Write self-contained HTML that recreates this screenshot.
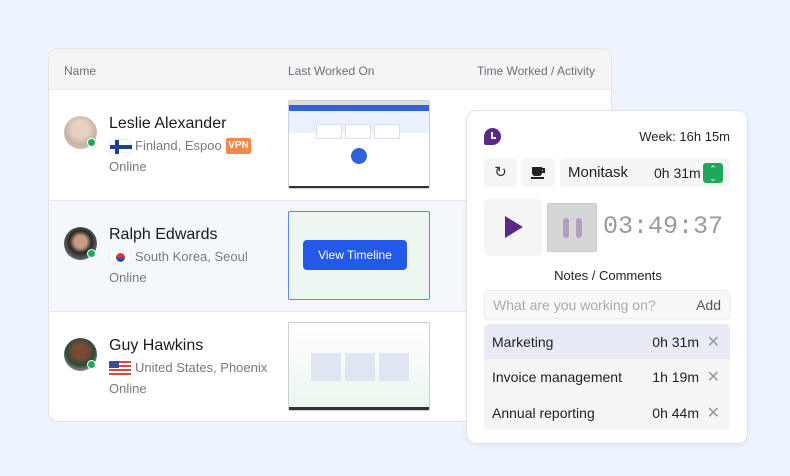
<!DOCTYPE html>
<html><head><meta charset="utf-8"><style>
*{box-sizing:border-box;margin:0;padding:0}
body{width:790px;height:476px;background:#eef4fd;font-family:"Liberation Sans",sans-serif;position:relative;overflow:hidden}
.a{position:absolute}
.card{left:48px;top:48px;width:564px;height:374px;background:#fff;border:1px solid #dfe3ea;border-radius:10px;overflow:hidden}
.hdr{left:0;top:0;width:564px;height:41px;background:#f5f5f6;border-bottom:1px solid #e6e8ec;font-size:12px;color:#6b6f76}
.row{left:0;width:564px;height:111px;border-bottom:1px solid #e3e7ee}
.av{width:33px;height:33px;border-radius:50%;left:15px}
.dot{width:9px;height:9px;border-radius:50%;background:#1eaa5c;border:1px solid #fff}
.nm{left:60px;font-size:16px;color:#1a1a1a}
.loc{left:60px;font-size:13px;color:#7a7a7a}
.on{left:60px;font-size:13px;color:#7a7a7a}
.th{left:239px;width:142px;height:89px;border:1px solid #ccd;border-radius:2px;background:#f3f6fb;overflow:hidden}
.panel{left:466px;top:110px;width:282px;height:334px;background:#fff;border:1px solid #dde2ea;border-radius:10px;box-shadow:0 2px 6px rgba(0,0,0,.05)}
.box{background:#f5f5f5;border-radius:5px}
.it{left:17px;width:246px;height:35px;font-size:14px;color:#222}
.it span{position:absolute;top:10px}
</style></head><body>
<div class="a card">
 <div class="a hdr"><span class="a" style="left:15px;top:15px">Name</span><span class="a" style="left:239px;top:15px">Last Worked On</span><span class="a" style="right:18px;top:15px">Time Worked / Activity</span></div>
 <div class="a row" style="top:41px">
  <div class="a av" style="top:26px;background:radial-gradient(circle at 50% 40%,#e8d2c4 30%,#c9b3a8 60%,#d8d0cc)"></div>
  <div class="a dot" style="left:38px;top:48px"></div>
  <div class="a nm" style="top:25px">Leslie Alexander</div>
  <div class="a" style="left:60px;top:49px;width:22px;height:14px;background:#fff;border:1px solid #eee"><div class="a" style="left:5px;top:0;width:4px;height:14px;background:#1d3f8f"></div><div class="a" style="left:0;top:5px;width:22px;height:4px;background:#1d3f8f"></div></div>
  <div class="a loc" style="left:86px;top:48px">Finland, Espoo</div>
  <div class="a" style="left:177px;top:48px;width:25px;height:16px;background:#f5874a;color:#fff;font-size:10px;font-weight:bold;text-align:center;line-height:16px;border-radius:2px">VPN</div>
  <div class="a on" style="top:69px">Online</div>
  <div class="a th" style="top:10px;background:#fff"><div class="a" style="left:0;top:0;width:142px;height:4px;background:#ddd"></div><div class="a" style="left:0;top:4px;width:142px;height:6px;background:#2f62d8"></div><div class="a" style="left:0;top:10px;width:142px;height:22px;background:#eaf1fd"></div><div class="a" style="left:27px;top:23px;width:26px;height:15px;border:1px solid #dde;background:#fff"></div><div class="a" style="left:56px;top:23px;width:26px;height:15px;border:1px solid #dde;background:#fff"></div><div class="a" style="left:85px;top:23px;width:26px;height:15px;border:1px solid #dde;background:#fff"></div><div class="a" style="left:62px;top:47px;width:16px;height:16px;border-radius:50%;background:#2f62d8"></div><div class="a" style="left:0;top:85px;width:142px;height:3px;background:#333"></div></div>
 </div>
 <div class="a row" style="top:152px;background:#f4f7fc">
  <div class="a av" style="top:26px;background:radial-gradient(circle at 50% 45%,#c89c80 25%,#2a2a2a 45%,#9aa8a8)"></div>
  <div class="a dot" style="left:38px;top:48px"></div>
  <div class="a nm" style="top:25px">Ralph Edwards</div>
  <div class="a" style="left:60px;top:49px;width:22px;height:14px;background:#fff;border:1px solid #eee"><div class="a" style="left:6px;top:2px;width:9px;height:9px;border-radius:50%;background:linear-gradient(#d33 50%,#2653a8 50%)"></div></div>
  <div class="a loc" style="left:86px;top:48px">South Korea, Seoul</div>
  <div class="a on" style="top:69px">Online</div>
  <div class="a th" style="top:10px;border:1px solid #5b8af0;background:#eef6f1"><div class="a" style="left:14px;top:28px;width:104px;height:30px;background:#2458e6;border-radius:4px;color:#fff;font-size:12px;text-align:center;line-height:30px">View Timeline</div></div>
 </div>
 <div class="a row" style="top:263px;border:none">
  <div class="a av" style="top:26px;background:radial-gradient(circle at 50% 40%,#7a4a34 28%,#2c4a36 55%,#ddd)"></div>
  <div class="a dot" style="left:38px;top:48px"></div>
  <div class="a nm" style="top:25px">Guy Hawkins</div>
  <div class="a" style="left:60px;top:49px;width:22px;height:14px;background:repeating-linear-gradient(#d44 0 2px,#fff 2px 4px)"><div class="a" style="left:0;top:0;width:10px;height:7px;background:#3a4d9a"></div></div>
  <div class="a loc" style="left:86px;top:48px">United States, Phoenix</div>
  <div class="a on" style="top:69px">Online</div>
  <div class="a th" style="top:10px;background:linear-gradient(#fff,#eaf6ee)"><div class="a" style="left:22px;top:30px;width:98px;height:28px;background:repeating-linear-gradient(90deg,#dde6f2 0 30px,transparent 30px 34px)"></div><div class="a" style="left:0;top:84px;width:142px;height:4px;background:#333"></div></div>
 </div>
</div>
<div class="a panel">
 <div class="a" style="left:17px;top:17px;width:17px;height:17px;border-radius:50% 50% 50% 2px;background:#5b2a86"><div class="a" style="left:7px;top:4px;width:2px;height:6px;background:#fff"></div><div class="a" style="left:7px;top:9px;width:5px;height:2px;background:#fff"></div></div>
 <div class="a" style="right:17px;top:18px;font-size:13px;color:#222">Week: 16h 15m</div>
 <div class="a box" style="left:17px;top:47px;width:33px;height:29px;font-size:15px;text-align:center;line-height:29px;color:#333">↻</div>
 <div class="a box" style="left:54px;top:47px;width:34px;height:29px"><div class="a" style="left:11px;top:9px;width:10px;height:9px;background:#222;border-radius:0 0 3px 3px"></div><div class="a" style="left:20px;top:10px;width:4px;height:5px;border:2px solid #222;border-left:none"></div><div class="a" style="left:10px;top:19px;width:13px;height:2px;background:#222"></div></div>
 <div class="a box" style="left:93px;top:47px;width:170px;height:29px"><span class="a" style="left:8px;top:6px;font-size:15px;color:#222">Monitask</span><span class="a" style="left:94px;top:7px;font-size:14px;color:#222">0h 31m</span><div class="a" style="left:143px;top:5px;width:20px;height:20px;background:#1ea85a;border-radius:3px;color:#fff;font-size:9px;text-align:center;line-height:9px;padding-top:2px">⌃<br>⌄</div></div>
 <div class="a box" style="left:17px;top:88px;width:58px;height:57px"><svg class="a" style="left:20px;top:16px" width="20" height="24"><path d="M1 1L19 12L1 23Z" fill="#5b2a86"/></svg></div>
 <div class="a" style="left:80px;top:92px;width:50px;height:49px;background:#d6d6d6;border:1px solid #ccc;border-radius:2px"><div class="a" style="left:15px;top:14px;width:6px;height:20px;background:#b29cc1;border-radius:3px"></div><div class="a" style="left:28px;top:14px;width:6px;height:20px;background:#b29cc1;border-radius:3px"></div></div>
 <div class="a" style="left:136px;top:101px;font-family:'Liberation Mono',monospace;font-size:25px;color:#9a9a9a">03:49:37</div>
 <div class="a" style="left:0;width:282px;top:157px;text-align:center;font-size:13px;color:#222">Notes / Comments</div>
 <div class="a" style="left:17px;top:179px;width:246px;height:29px;background:#f7f8fa;border:1px solid #eceef2;border-radius:4px;box-shadow:0 1px 2px rgba(0,0,0,.06)"><span class="a" style="left:8px;top:6px;font-size:14px;color:#aaa">What are you working on?</span><span class="a" style="right:8px;top:6px;font-size:14px;color:#555">Add</span></div>
 <div class="a" style="left:17px;top:213px;width:246px;height:106px;background:#f5f5f5;border-radius:5px"></div>
 <div class="a it" style="top:213px;background:#e8ebf5;border-radius:5px 5px 0 0"><span style="left:8px">Marketing</span><span style="right:31px">0h 31m</span><span style="right:10px;color:#999;font-size:16px;top:8px">✕</span></div>
 <div class="a it" style="top:248px"><span style="left:8px">Invoice management</span><span style="right:31px">1h 19m</span><span style="right:10px;color:#999;font-size:16px;top:8px">✕</span></div>
 <div class="a it" style="top:284px"><span style="left:8px">Annual reporting</span><span style="right:31px">0h 44m</span><span style="right:10px;color:#999;font-size:16px;top:8px">✕</span></div>
</div>
</body></html>
